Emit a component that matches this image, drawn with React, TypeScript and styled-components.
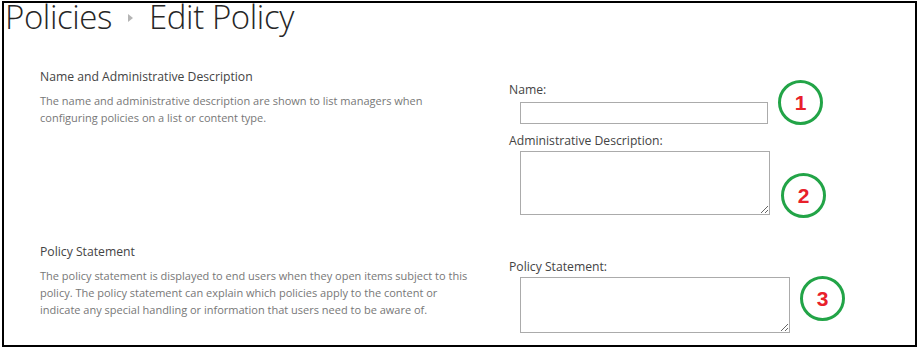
import styled, { createGlobalStyle } from "styled-components";

const GlobalStyle = createGlobalStyle`
  html, body {
    margin: 0;
    padding: 0;
    background: #fff;
  }
  body {
    font-family: "Open Sans", "Liberation Sans", sans-serif;
    color: #444;
  }
`;

const Frame = styled.div`
  box-sizing: border-box;
  width: 915px;
  height: 346px;
  margin: 1px 0 0 2px;
  border: 2px solid #000;
`;

const TitleBar = styled.h1`
  display: flex;
  align-items: center;
  gap: 16px;
  margin: 0 0 0 1px;
  font-size: 33px;
  font-weight: 300;
  line-height: 28px;
  color: #262626;
  letter-spacing: -0.4px;
`;

const Crumb = styled.span``;

const Separator = styled.span`
  width: 0;
  height: 0;
  margin-top: 2px;
  border-top: 4px solid transparent;
  border-bottom: 4px solid transparent;
  border-left: 5px solid #b5b5b5;
`;

const Content = styled.div`
  padding: 37px 0 0 36px;
`;

const Section = styled.div<{ $space?: number }>`
  display: grid;
  grid-template-columns: 469px 1fr;
  align-items: start;
  margin-top: ${({ $space }) => $space ?? 0}px;
`;

const Info = styled.div``;

const Heading = styled.div`
  font-size: 12.2px;
  line-height: 18px;
  color: #444;
`;

const Description = styled.p`
  margin: 6px 0 0;
  max-width: 440px;
  font-size: 11px;
  line-height: 17px;
  color: #777;
`;

const Fields = styled.div<{ $top: number }>`
  padding-top: ${({ $top }) => $top}px;
`;

const Label = styled.div<{ $space?: number }>`
  margin-top: ${({ $space }) => $space ?? 0}px;
  font-size: 12.2px;
  line-height: 18px;
  color: #444;
`;

const FieldRow = styled.div`
  display: flex;
  align-items: flex-start;
  margin-left: 11px;
`;

const TextInput = styled.input`
  box-sizing: border-box;
  width: 248px;
  height: 22px;
  margin: 3px 0 0;
  padding: 0 4px;
  border: 1px solid #ababab;
  font: inherit;
`;

const TextArea = styled.textarea<{ $w: number; $h: number }>`
  box-sizing: border-box;
  width: ${({ $w }) => $w}px;
  height: ${({ $h }) => $h}px;
  margin: 1px 0 0;
  padding: 2px 4px;
  border: 1px solid #ababab;
  font: inherit;
  resize: both;
`;

const Marker = styled.div<{ $dx: number; $dy: number }>`
  flex: none;
  box-sizing: border-box;
  width: 45px;
  height: 45px;
  margin-left: ${({ $dx }) => $dx}px;
  margin-top: ${({ $dy }) => $dy}px;
  border: 3px solid #22a447;
  border-radius: 50%;
  display: flex;
  align-items: center;
  justify-content: center;
  font-family: "Liberation Sans", Arial, sans-serif;
  font-weight: 700;
  font-size: 21px;
  color: #e8202a;
`;

export default function App() {
  return (
    <>
      <GlobalStyle />
      <Frame>
        <TitleBar>
          <Crumb>Policies</Crumb>
          <Separator />
          <Crumb>Edit Policy</Crumb>
        </TitleBar>
        <Content>
          <Section>
            <Info>
              <Heading>Name and Administrative Description</Heading>
              <Description>
                The name and administrative description are shown to list managers when
                configuring policies on a list or content type.
              </Description>
            </Info>
            <Fields $top={13}>
              <Label>Name:</Label>
              <FieldRow>
                <TextInput type="text" />
                <Marker $dx={10} $dy={-19}>1</Marker>
              </FieldRow>
              <Label $space={7}>Administrative Description:</Label>
              <FieldRow>
                <TextArea $w={250} $h={64} />
                <Marker $dx={11} $dy={23}>2</Marker>
              </FieldRow>
            </Fields>
          </Section>
          <Section $space={25}>
            <Info>
              <Heading>Policy Statement</Heading>
              <Description>
                The policy statement is displayed to end users when they open items subject
                to this policy. The policy statement can explain which policies apply to the
                content or indicate any special handling or information that users need to be
                aware of.
              </Description>
            </Info>
            <Fields $top={15}>
              <Label>Policy Statement:</Label>
              <FieldRow>
                <TextArea $w={270} $h={56} />
                <Marker $dx={10} $dy={0}>3</Marker>
              </FieldRow>
            </Fields>
          </Section>
        </Content>
      </Frame>
    </>
  );
}
